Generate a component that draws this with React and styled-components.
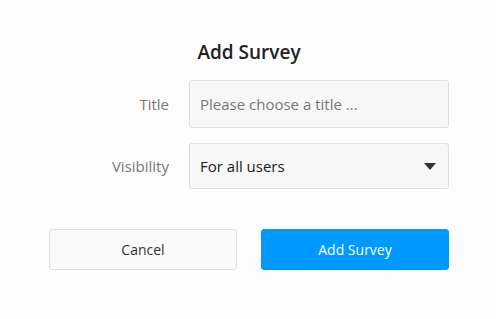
import React from 'react';
import styled, { createGlobalStyle } from 'styled-components';

const GlobalStyle = createGlobalStyle`
    html, body {
        margin: 0;
        padding: 0;
        background: #fdfdfd;
        font-family: "Open Sans", "Liberation Sans", sans-serif;
    }
`

const Dialog = styled.div`
    width: 496px;
    height: 319px;
    box-sizing: border-box;
    padding: 39px 47px 0 49px;
    display: flex;
    flex-direction: column;
`
const Heading = styled.h1`
    margin: 0 0 15px;
    font-size: 19px;
    line-height: 26px;
    font-weight: 600;
    color: #222;
    text-align: center;
`
const Form = styled.div`
    display: flex;
    flex-direction: column;
    gap: 15px;
`
const Row = styled.div`
    display: flex;
    align-items: center;
    gap: 20px;
`
const Label = styled.label`
    width: 120px;
    text-align: right;
    font-size: 15px;
    color: #777;
`
const Field = styled.div`
    flex: 1;
    height: ${props => props.height}px;
    box-sizing: border-box;
    border: 1px solid #dedede;
    border-radius: 3px;
    background: #f7f7f7;
    display: flex;
    align-items: center;
    padding: 0 10px;
    font-size: 15px;
    color: ${props => props.placeholder ? '#777' : '#1a1a1a'};
`
const Value = styled.span`
    flex: 1;
`
const Arrow = styled.span`
    width: 0;
    height: 0;
    margin-right: 2px;
    border-left: 6px solid transparent;
    border-right: 6px solid transparent;
    border-top: 7px solid #333;
`
const Actions = styled.div`
    margin-top: 40px;
    display: flex;
    gap: 24px;
`
const Button = styled.button`
    flex: 1;
    height: 41px;
    border-radius: 3px;
    font-family: inherit;
    font-size: 14px;
    cursor: pointer;
    border: 1px solid ${props => props.primary ? '#0099ff' : '#e0e0e0'};
    background: ${props => props.primary ? '#0099ff' : '#fafafa'};
    color: ${props => props.primary ? '#fff' : '#333'};
`

export default function App(){
    return(
        <>
            <GlobalStyle/>
            <Dialog>
                <Heading>Add Survey</Heading>
                <Form>
                    <Row>
                        <Label>Title</Label>
                        <Field height={48} placeholder={true}>
                            <Value>Please choose a title ...</Value>
                        </Field>
                    </Row>
                    <Row>
                        <Label>Visibility</Label>
                        <Field height={46}>
                            <Value>For all users</Value>
                            <Arrow/>
                        </Field>
                    </Row>
                </Form>
                <Actions>
                    <Button>Cancel</Button>
                    <Button primary={true}>Add Survey</Button>
                </Actions>
            </Dialog>
        </>
    )
}
